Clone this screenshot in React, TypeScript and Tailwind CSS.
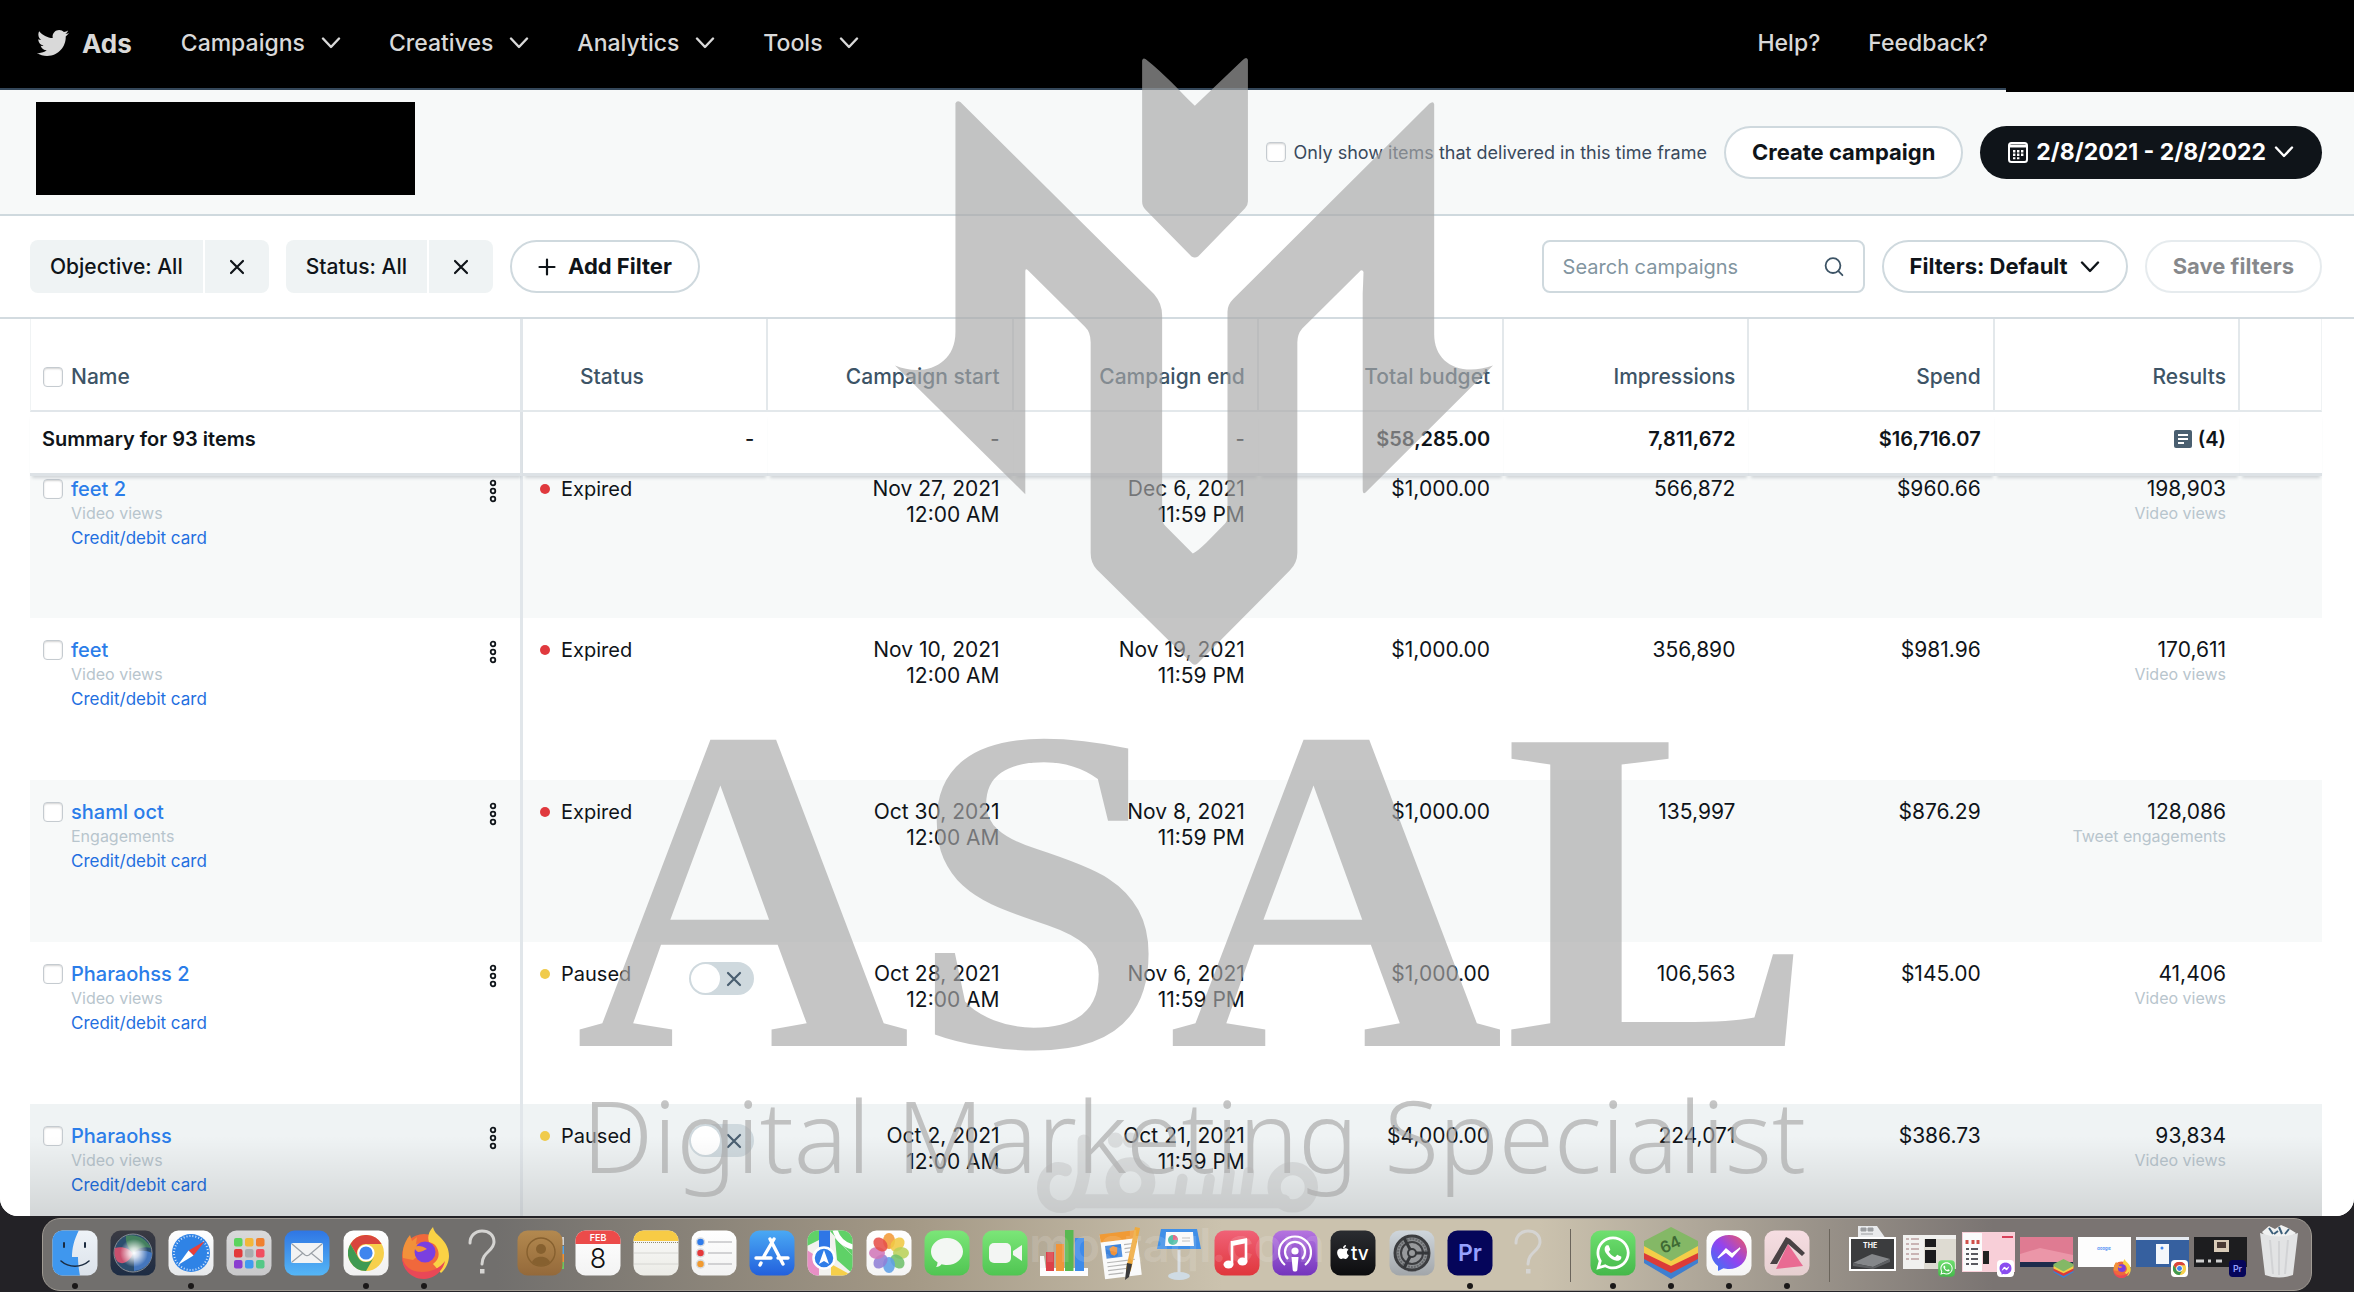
import React from "react";
import { FaApple, FaFacebookMessenger, FaTwitter, FaWhatsapp } from "react-icons/fa";

/* ---------- small glyphs ---------- */

function Chevron() {
  return (
    <svg viewBox="0 0 20 12" className="h-3 w-5" fill="none" stroke="currentColor" strokeWidth="2.4" strokeLinecap="round" strokeLinejoin="round" aria-hidden="true">
      <path d="M2 1.5l8 8.5 8-8.5" />
    </svg>
  );
}

function Cross() {
  return (
    <svg viewBox="0 0 16 16" className="h-4 w-4" fill="none" stroke="currentColor" strokeWidth="2.2" strokeLinecap="round" aria-hidden="true">
      <path d="M2 2l12 12M14 2L2 14" />
    </svg>
  );
}

function Plus() {
  return (
    <svg viewBox="0 0 18 18" className="h-[18px] w-[18px]" fill="none" stroke="currentColor" strokeWidth="2.2" strokeLinecap="round" aria-hidden="true">
      <path d="M9 1.5v15M1.5 9h15" />
    </svg>
  );
}

function SearchIcon() {
  return (
    <svg viewBox="0 0 20 20" className="h-5 w-5 text-[#3d5466]" fill="none" stroke="currentColor" strokeWidth="1.8" strokeLinecap="round" aria-hidden="true">
      <circle cx="9" cy="8.6" r="7.4" />
      <path d="M14.4 14.2l4 4" />
    </svg>
  );
}

function CalendarIcon() {
  return (
    <svg viewBox="0 0 20 21" className="h-[21px] w-5" aria-hidden="true">
      <rect x="1" y="1" width="18" height="19" rx="2.5" fill="none" stroke="#fff" strokeWidth="2" />
      <path d="M1 2.5h18v3H1z" fill="#fff" />
      <path d="M5 8h2.4v2.4H5zM9 8h2.4v2.4H9zM13 8h2.4v2.4H13zM5 11.6h2.4V14H5zM9 11.6h2.4V14H9zM13 11.6h2.4V14H13zM5 15.2h2.4v2H5zM9 15.2h2.4v2H9z" fill="#fff" />
    </svg>
  );
}

function DotsIcon() {
  return (
    <svg viewBox="0 0 8 24" className="h-6 w-2" fill="none" stroke="#0f1419" strokeWidth="1.8" aria-hidden="true">
      <circle cx="4" cy="4" r="2.300" />
      <circle cx="4" cy="12" r="2.300" />
      <circle cx="4" cy="20" r="2.300" />
    </svg>
  );
}

function NoteIcon() {
  return (
    <svg viewBox="0 0 18 18" className="h-[18px] w-[18px]" aria-hidden="true">
      <rect width="18" height="18" rx="2" fill="#4a5f70" />
      <path d="M4 5h10M4 9h10M4 13h6" stroke="#fff" strokeWidth="1.8" />
    </svg>
  );
}

const box =
  "block h-5 w-5 shrink-0 appearance-none rounded-[4px] border border-[#c5cbd0] bg-white shadow-[inset_0_1px_2px_rgba(0,0,0,0.18)]";

/* ---------- top bar ---------- */

function TopBar() {
  return (
    <header className="relative flex h-[90px] shrink-0 items-center border-b-2 border-[#34475a] bg-black pr-[366px] pb-0.5 pl-[36px] text-[#d9d9d9]">
      <div className="absolute top-0 right-0 h-[92px] w-[348px] bg-black" />
      <a href="#home" className="flex items-center gap-3">
        <FaTwitter className="h-8 w-[34px]" />
        <span className="text-[26px] font-bold">Ads</span>
      </a>
      <nav className="ml-[49px] flex flex-1 items-center gap-12">
        {["Campaigns", "Creatives", "Analytics", "Tools"].map((t) => (
          <button key={t} type="button" className="flex items-center gap-4 text-[23px] font-medium">
            {t}
            <Chevron />
          </button>
        ))}
        <a href="#help" className="ml-auto text-[23px] font-medium">Help?</a>
        <a href="#feedback" className="text-[23px] font-medium">Feedback?</a>
      </nav>
    </header>
  );
}

const pill = "flex h-[53px] items-center gap-3 rounded-full border-2 border-[#cfd9de] bg-white px-[26px] text-[22px] font-bold whitespace-nowrap text-[#0f1419]";

function SubHeader() {
  return (
    <section className="flex h-[126px] shrink-0 items-center border-b-2 border-[#cfd9de] bg-[#f7f9f9] pr-8 pl-9">
      <div className="mb-2 h-[93px] w-[379px] bg-black" />
      <div className="ml-auto flex items-center gap-[17px]">
        <label className="flex items-center gap-2 text-[18px] text-[#3a4a5c]">
          <input type="checkbox" className={box} />
          Only show items that delivered in this time frame
        </label>
        <button type="button" className={pill}>Create campaign</button>
        <button type="button" className="flex h-[53px] items-center gap-2 rounded-full bg-[#0f1419] px-7 text-[23px] font-bold whitespace-nowrap text-white">
          <CalendarIcon />
          2/8/2021 - 2/8/2022
          <Chevron />
        </button>
      </div>
    </section>
  );
}

function Chip({ text }: { text: string }) {
  return (
    <div className="flex h-[53px] gap-0.5 overflow-hidden rounded-lg text-[21px] font-medium text-[#0f1419]">
      <button type="button" className="bg-[#eff3f4] px-5">{text}</button>
      <button type="button" aria-label={"Remove " + text} className="flex w-[64px] items-center justify-center bg-[#eff3f4]">
        <Cross />
      </button>
    </div>
  );
}

function Toolbar() {
  return (
    <section className="flex h-[103px] shrink-0 items-center gap-[17px] border-b-2 border-[#d3dbe0] bg-white pr-8 pl-[30px]">
      <Chip text="Objective: All" />
      <Chip text="Status: All" />
      <button type="button" className={pill}>
        <Plus />
        Add Filter
      </button>
      <label className="ml-auto flex h-[53px] w-[323px] items-center rounded-lg border-2 border-[#cfd9de] px-[19px]">
        <input type="text" aria-label="Search campaigns" placeholder="Search campaigns" className="min-w-0 flex-1 bg-transparent text-[20px] outline-none placeholder:text-[#8295a0]" />
        <SearchIcon />
      </label>
      <button type="button" className={pill}>
        Filters: Default
        <Chevron />
      </button>
      <button type="button" className={pill + " opacity-50"}>Save filters</button>
    </section>
  );
}

/* ---------- table ---------- */

type Row = {
  name: string; kind: string; status: "Expired" | "Paused"; start: string; end: string;
  budget: string; impressions: string; spend: string; results: string; resultKind: string;
};

const rows: Row[] = [
  { name: "feet 2", kind: "Video views", status: "Expired", start: "Nov 27, 2021", end: "Dec 6, 2021", budget: "$1,000.00", impressions: "566,872", spend: "$960.66", results: "198,903", resultKind: "Video views" },
  { name: "feet", kind: "Video views", status: "Expired", start: "Nov 10, 2021", end: "Nov 19, 2021", budget: "$1,000.00", impressions: "356,890", spend: "$981.96", results: "170,611", resultKind: "Video views" },
  { name: "shaml oct", kind: "Engagements", status: "Expired", start: "Oct 30, 2021", end: "Nov 8, 2021", budget: "$1,000.00", impressions: "135,997", spend: "$876.29", results: "128,086", resultKind: "Tweet engagements" },
  { name: "Pharaohss 2", kind: "Video views", status: "Paused", start: "Oct 28, 2021", end: "Nov 6, 2021", budget: "$1,000.00", impressions: "106,563", spend: "$145.00", results: "41,406", resultKind: "Video views" },
  { name: "Pharaohss", kind: "Video views", status: "Paused", start: "Oct 2, 2021", end: "Oct 21, 2021", budget: "$4,000.00", impressions: "224,071", spend: "$386.73", results: "93,834", resultKind: "Video views" },
];

const headCell = "h-[93px] border-r-2 border-b-2 border-[#e3e8eb] pt-6 pr-3 text-right align-middle font-medium";
const sumCell = "relative z-10 h-[64px] border-b-[3px] border-[#dde2e6] bg-white pr-3.5 pb-2 text-right align-middle text-[#0f1419] shadow-[0_4px_3px_-2px_rgba(120,130,140,0.3)]";

function CampaignRow({ row, index }: { row: Row; index: number }) {
  const first = index === 0;
  const bg = index === 4 ? "bg-[#eff3f4]" : index % 2 === 0 ? "bg-[#f7f9f9]" : "bg-white";
  const pad = first ? "pt-0" : "pt-[19px]";
  const num = pad + " pr-3.5 text-right align-top text-[21px]";
  return (
    <tr className={bg + (first ? " h-[142px]" : " h-[162px]")}>
      <td className={pad + " border-r-[3px] border-[#e1e6ea] pr-4 pl-[13px] align-top"}>
        <div className="flex">
          <input type="checkbox" aria-label={"Select " + row.name} className={box + " mt-[3px] mr-2"} />
          <div className="flex-1">
            <a href="#campaign" className="block leading-[26px] font-medium text-[#2b7de9]">{row.name}</a>
            <div className="text-[16px] leading-[22px] text-[#b8c5cd]">{row.kind}</div>
            <a href="#card" className="block text-[17px] leading-[29px] text-[#1f6fe0]">Credit/debit card</a>
          </div>
          <button type="button" aria-label={"Options for " + row.name} className="mt-[3px] h-6 w-[22px] pl-[7px]">
            <DotsIcon />
          </button>
        </div>
      </td>
      <td className={pad + " pr-[14px] pl-[17px] align-top"}>
        <div className="flex items-start leading-[26px]">
          <span className={"mt-2 mr-[11px] h-2.5 w-2.5 rounded-full " + (row.status === "Expired" ? "bg-[#e0393e]" : "bg-[#f0cb4c]")} />
          {row.status}
          {row.status === "Paused" && (
            <button type="button" role="switch" aria-checked="false" aria-label={"Run " + row.name} className="mt-px ml-auto flex h-[33px] w-[65px] items-center rounded-full border-2 border-[#cfd9de] bg-[#cfd9de] text-[#4a5f70]">
              <span className="mr-1.5 h-[29px] w-[29px] rounded-full bg-white" />
              <Cross />
            </button>
          )}
        </div>
      </td>
      <td className={num + " leading-[26px]"}>{row.start}<br />12:00 AM</td>
      <td className={num + " leading-[26px]"}>{row.end}<br />11:59 PM</td>
      <td className={num + " leading-[26px]"}>{row.budget}</td>
      <td className={num + " leading-[26px]"}>{row.impressions}</td>
      <td className={num + " leading-[26px]"}>{row.spend}</td>
      <td className={num}>
        <div className="leading-[26px]">{row.results}</div>
        <div className="text-[16px] leading-[22px] text-[#b8c5cd]">{row.resultKind}</div>
      </td>
      <td />
    </tr>
  );
}

function CampaignTable() {
  return (
    <div className="relative min-h-0 flex-1 overflow-hidden bg-white pr-8 pl-[30px]">
      <table className="w-full table-fixed border-separate border-spacing-0 text-[20px] text-[#0f1419]">
        <colgroup>
          <col className="w-[493px]" />
          <col /><col /><col /><col /><col /><col /><col />
          <col className="w-[82px]" />
        </colgroup>
        <thead className="text-[21px] text-[#3d5466]">
          <tr>
            <th className="h-[93px] border-r-[3px] border-b-2 border-l border-[#e1e6ea] border-l-[#f0f3f4] pt-6 pl-3 text-left align-middle font-medium">
              <label className="flex items-center gap-2"><input type="checkbox" className={box} />Name</label>
            </th>
            <th className="h-[93px] border-r-2 border-b-2 border-[#e3e8eb] pt-6 pl-[57px] text-left align-middle font-medium">Status</th>
            {["Campaign start", "Campaign end", "Total budget", "Impressions", "Spend", "Results"].map((h) => (
              <th key={h} className={headCell}>{h}</th>
            ))}
            <th className="border-r border-b-2 border-[#e3e8eb] border-r-[#f0f3f4]" />
          </tr>
        </thead>
        <tbody>
          <tr className="font-semibold">
            <td className={sumCell + " border-r-[3px] pl-3"}><div className="text-left">Summary for 93 items</div></td>
            <td className={sumCell + " font-medium"}>-</td>
            <td className={sumCell + " font-medium"}>-</td>
            <td className={sumCell + " font-medium"}>-</td>
            <td className={sumCell}>$58,285.00</td>
            <td className={sumCell}>7,811,672</td>
            <td className={sumCell}>$16,716.07</td>
            <td className={sumCell}><div className="flex items-center justify-end gap-1.5"><NoteIcon />(4)</div></td>
            <td className={sumCell} />
          </tr>
          {rows.map((r, i) => <CampaignRow key={r.name} row={r} index={i} />)}
        </tbody>
      </table>
      <div className="pointer-events-none absolute right-8 bottom-0 left-[30px] h-[80px] bg-linear-to-b from-transparent to-black/12" />
    </div>
  );
}

/* ---------- dock ---------- */

function Icon({ children }: { children: React.ReactNode }) {
  return <svg viewBox="0 0 46 46" className="h-[46px] w-[46px] overflow-visible" aria-hidden="true">{children}</svg>;
}

function Tile({ fill, fill2, id }: { fill: string; fill2?: string; id: string }) {
  return (
    <>
      <defs>
        <linearGradient id={id} x1="0" y1="0" x2="0" y2="1">
          <stop offset="0" stopColor={fill} />
          <stop offset="1" stopColor={fill2 || fill} />
        </linearGradient>
        <clipPath id={id + "-clip"}><rect x="0.5" y="0.5" width="45" height="45" rx="10" /></clipPath>
      </defs>
      <rect x="0.5" y="0.5" width="45" height="45" rx="10" fill={"url(#" + id + ")"} />
    </>
  );
}

function ChromeMark({ r = 18 }: { r?: number }) {
  return (
    <svg x={23 - r} y={23 - r} width={r * 2} height={r * 2} viewBox="-18 -18 36 36">
      <circle r="18" fill="#f7d04b" />
      <path d="M-15.6 -9A18 18 0 0 1 15.6 -9L0 -9A9 9 0 0 0 -7.8 4.5Z" fill="#d9453d" />
      <path d="M-15.6 -9A18 18 0 0 0 0 18L7.8 4.5A9 9 0 0 1 -7.8 4.5Z" fill="#3f9a52" />
      <circle r="8.6" fill="#fff" />
      <circle r="6.6" fill="#3f85ee" />
    </svg>
  );
}

function FirefoxMark() {
  return (
    <>
      <circle cx="23" cy="26" r="22" fill="#f0683c" />
      <path d="M2 20C3 14 5 10 9 5l2 6 5-4-1 7c4-1 8 1 10 5L12 30 2 28z" fill="#f2913a" />
      <path d="M32 34c6-4 7-10 4-16-1-3-4-5-8-6-2-5 0-11 4-15 1 5 4 7 8 11 5 5 8 11 8 18 0 6-3 13-8 17z" fill="#fad245" />
      <path d="M1 27c2 9 9 15 20 15 10 0 18-4 23-11-2 10-11 18-21 18C11 49 1 40 1 27z" fill="#e94857" />
      <circle cx="24" cy="22" r="10.500" fill="#7a3fe0" />
      <path d="M13 17c4-2 9-1 13 2-3 1-5 3-9 3-2-1-3-3-4-5z" fill="#f2913a" />
    </>
  );
}

function Question() {
  return (
    <Icon>
      <path d="M11 13c0-7 5-12 12-12s12 4 12 11c0 9-12 10-12 22" fill="none" stroke="#d5d4d2" strokeWidth="3" strokeLinecap="round" />
      <rect x="21" y="39" width="4.500" height="4.500" fill="#d5d4d2" />
    </Icon>
  );
}

function Layers() {
  return (
    <>
      <path d="M-4 24L23 39 50 24V33L23 49-4 33z" fill="#3f7fd0" />
      <path d="M-4 20L23 34 50 20V29L23 43-4 29z" fill="#db3b38" />
      <path d="M-4 14L23 28 50 14V23L23 36-4 23z" fill="#f4ce48" />
      <path d="M-4 11L23-3 50 11V16L23 31-4 16z" fill="#84b866" />
    </>
  );
}

const petals = [
  ["#f29a38", 0], ["#f0c843", 45], ["#b9d05a", 90], ["#6fc06c", 135], ["#5f9fe6", 180], ["#8f7fd6", 225], ["#d078b8", 270], ["#e6504a", 315],
] as const;

const launchColors = ["#5bd45e", "#f2b73a", "#f08030", "#e23b3b", "#a9adb0", "#f04f62", "#8a3fd0", "#3f9bf0", "#54c887"];

function Thumb({ h, bg, children, badge }: { h: number; bg: string; children?: React.ReactNode; badge?: React.ReactNode }) {
  return (
    <svg viewBox="0 0 54 54" className="h-[54px] w-[54px] overflow-visible" aria-hidden="true">
      <rect x="0" y={26 - h / 2} width="53" height={h} fill={bg} />
      {children}
      {badge && <svg x="35" y="34" width="17" height="17" viewBox="0 0 46 46" overflow="visible">{badge}</svg>}
    </svg>
  );
}

const messengerMark = <FaFacebookMessenger size={34} x={6} y={6} color="#8a4df0" />;

const apps: { name: string; run?: boolean; art: React.ReactNode }[] = [
  { name: "Finder", run: true, art: <Icon><Tile id="finder" fill="#eef3f8" fill2="#dbe2ea" /><path clipPath="url(#finder-clip)" d="M0 0H27C22 10 20 18 20 27H26C26 34 27 40 28 46H0z" fill="#3f97ee" /><path d="M12 13v4M33 13v4" stroke="#1b2b40" strokeWidth="2" strokeLinecap="round" /><path d="M9 31c8 7 20 7 28 0" fill="none" stroke="#1b2b40" strokeWidth="1.600" strokeLinecap="round" /></Icon> },
  { name: "Siri", art: <Icon><defs><radialGradient id="siri-glow"><stop offset="0" stopColor="#fff" /><stop offset=".35" stopColor="#fff" stopOpacity=".75" /><stop offset="1" stopColor="#fff" stopOpacity="0" /></radialGradient></defs><Tile id="siri" fill="#3a3a42" fill2="#1d2c44" /><circle cx="23" cy="23" r="19" fill="#2c4d6e" stroke="#8a8f95" /><path d="M5 18c8-2 15 1 18 6-4 8-10 11-15 8-4-4-4-10-3-14z" fill="#c9506e" /><path d="M16 6c10-3 21 3 25 12-8-2-13 0-18 5-4-4-8-10-7-17z" fill="#44805f" /><path d="M42 23c0 10-8 17-18 18 0-8 0-13-1-18 6-3 13-3 19 0z" fill="#4476bd" /><circle cx="24" cy="23" r="14" fill="url(#siri-glow)" /></Icon> },
  { name: "Safari", run: true, art: <Icon><Tile id="safari" fill="#ffffff" fill2="#e6e8ea" /><circle cx="23" cy="23" r="19" fill="#2f83e6" /><circle cx="23" cy="23" r="17" fill="none" stroke="#cfe2fa" strokeWidth="2" strokeDasharray="1 2" /><path d="M37 11L20.500 20.500 25.500 25.500z" fill="#e8403b" /><path d="M10 35L20.500 20.500 25.500 25.500z" fill="#fff" /></Icon> },
  { name: "Launchpad", art: <Icon><Tile id="launch" fill="#d9d9da" fill2="#c8c8ca" />{launchColors.map((c, i) => <rect key={c} x={8 + (i % 3) * 11} y={8 + Math.floor(i / 3) * 11} width="8.500" height="8.500" rx="2" fill={c} />)}</Icon> },
  { name: "Mail", art: <Icon><Tile id="mail" fill="#2f76e4" fill2="#55b6f6" /><rect x="7" y="13" width="32" height="20" rx="2" fill="#f2f3f4" /><path d="M8 14l13 11c1.500 1 2.500 1 4 0l13-11M8 32l11-9M38 32l-11-9" fill="none" stroke="#9aa0a6" strokeWidth="1.200" /></Icon> },
  { name: "Chrome", run: true, art: <Icon><Tile id="chrome" fill="#ffffff" fill2="#f0f0f0" /><ChromeMark /></Icon> },
  { name: "Firefox", run: true, art: <Icon><FirefoxMark /></Icon> },
  { name: "Missing app", art: <Question /> },
  { name: "Contacts", art: <Icon><path d="M44 7h3v8h-3z" fill="#cfd0d2" /><path d="M44 16h3v8h-3z" fill="#4fa3ec" /><path d="M44 24h3v8h-3z" fill="#ef9236" /><path d="M44 32h3v7h-3z" fill="#6cc660" /><Tile id="contacts" fill="#b3894f" fill2="#94693a" /><circle cx="24" cy="22" r="14" fill="none" stroke="#86602f" strokeWidth="1.400" /><circle cx="24" cy="19" r="5" fill="#86602f" /><path d="M15 32c3-7 15-7 18 0-5 5-13 5-18 0z" fill="#86602f" /></Icon> },
  { name: "Calendar", art: <Icon><Tile id="cal" fill="#ffffff" fill2="#f3f3f3" /><path clipPath="url(#cal-clip)" d="M0 0h46v14H0z" fill="#ec4b4a" /><text x="23" y="11" textAnchor="middle" fontSize="9" fontWeight="600" fill="#fff">FEB</text><text x="23" y="38" textAnchor="middle" fontSize="27" fontWeight="300" fill="#111">8</text></Icon> },
  { name: "Notes", art: <Icon><Tile id="notes" fill="#fbfbfa" fill2="#ebebe6" /><path clipPath="url(#notes-clip)" d="M0 0h46v11H0z" fill="#f7cb45" /><path d="M0 12.500h46" stroke="#8f8a70" strokeDasharray="1 1" /><path d="M1 23h44M1 34h44" stroke="#d6d6d2" /></Icon> },
  { name: "Reminders", art: <Icon><Tile id="rem" fill="#ffffff" fill2="#f2f2f2" />{["#2f7bea", "#e5383b", "#f19a30"].map((c, i) => <g key={c}><circle cx="9.500" cy={12 + i * 11} r="4" fill={c} stroke="#d7dbe0" strokeWidth="1.500" /><path d={"M17 " + (12 + i * 11) + "h24"} stroke="#c9c9cb" strokeWidth="1.600" /></g>)}</Icon> },
  { name: "App Store", art: <Icon><Tile id="store" fill="#4aa9f4" fill2="#2260dd" /><path d="M21 9l13 25M25 9L14 28M11 35l1-2M7 28h15M29 28h10" stroke="#fff" strokeWidth="3.400" strokeLinecap="round" fill="none" /></Icon> },
  { name: "Maps", art: <Icon><Tile id="maps" fill="#f2f2ee" /><g clipPath="url(#maps-clip)"><path d="M22 0h24v26z" fill="#5fd167" /><path d="M0 0h12v10L0 16z" fill="#5fd167" /><path d="M12 0h11v22H12z" fill="#2f76e6" /><path d="M0 20l12 8v18H0z" fill="#e88fc4" /><path d="M24 46V34l22 12z" fill="#f6cf4a" /><path d="M30 30l16 14V26L28 8z" fill="#5fd167" /><path d="M28 0c3 10 9 15 18 17" fill="none" stroke="#fff" strokeWidth="5" /></g><circle cx="17" cy="28" r="10.500" fill="#2f7de8" stroke="#fff" strokeWidth="2.500" /><path d="M17 20l5 14-5-3-5 3z" fill="#fff" /></Icon> },
  { name: "Photos", art: <Icon><Tile id="photos" fill="#ffffff" fill2="#f4f4f4" />{petals.map(([c, a]) => <ellipse key={c} cx="23" cy="11" rx="6" ry="8" fill={c} opacity=".88" transform={"rotate(" + a + " 23 23)"} />)}</Icon> },
  { name: "Messages", art: <Icon><Tile id="msg" fill="#7be678" fill2="#50c552" /><path d="M23 8c9 0 16 6 16 13.500S32 35 23 35c-2 0-4-.3-5.500-.8-1.500 1.800-3 2.500-5.500 2.800 1-1.500 1.500-3 1.500-4.800C9.500 30 7 26 7 21.500 7 14 14 8 23 8z" fill="#f3f7f3" /></Icon> },
  { name: "FaceTime", art: <Icon><Tile id="face" fill="#7be678" fill2="#50c552" /><rect x="7" y="13" width="22" height="20" rx="5" fill="#f3f5f3" /><path d="M31 21l9-6v16l-9-6z" fill="#f3f5f3" /></Icon> },
  { name: "Numbers", art: <Icon><path d="M0 26h4l2 14h40v6H0z" fill="#f6f6f6" /><path d="M0 38h48v8H0z" fill="#fdfdfd" /><path d="M6 22h8v19H6z" fill="#dc4048" /><path d="M16 14h8v27h-8z" fill="#f0953a" /><path d="M25 0h8.500v41H25z" fill="#58b850" /><path d="M35 8h9v33h-9z" fill="#3e8bea" /></Icon> },
  { name: "Pages", art: <Icon><g transform="rotate(-7 23 23)"><path d="M4 3h37v44H4z" fill="#fafafa" /><path d="M4 2h37v8H4z" fill="#f09a35" /><path d="M8 14h16v13H8z" fill="#3c83dc" /><path d="M12 17l4-2 4 2-1 6-3 2-3-2z" fill="#f0923a" /><path d="M27 15h11M27 19h11M27 23h9M8 31h28M8 35h25M8 39h22M8 43h15" stroke="#b5b5b5" strokeWidth="1.200" /></g><path d="M37-3l5 1-9 42-4 8-1-9z" fill="#efaa3d" /><path d="M29 33l5 1-3 13-4 3z" fill="#3a3a3c" /></Icon> },
  { name: "Keynote", art: <Icon><path d="M5-1h36l4 20H1z" fill="#3f8fe8" /><path d="M10 2h27l1 14H9z" fill="#fafafa" /><circle cx="17" cy="10" r="5" fill="#57c0a8" /><path d="M17 5a5 5 0 0 1 5 5h-5z" fill="#e86a8a" /><path d="M26 8h8M26 11h8" stroke="#bbb" /><path d="M21.500 20h3v25h-3z" fill="#d8dde1" /><ellipse cx="23" cy="46" rx="11" ry="4" fill="#cfdbe4" /></Icon> },
  { name: "Music", art: <Icon><Tile id="music" fill="#f06277" fill2="#e0363c" /><path d="M18 11l15-3v5l-15 3z" fill="#fff" /><path d="M18 11v23M32 9v22" stroke="#fff" strokeWidth="2.600" /><ellipse cx="14.500" cy="34.500" rx="5" ry="4" fill="#fff" /><ellipse cx="28.500" cy="31.500" rx="5" ry="4" fill="#fff" /></Icon> },
  { name: "Podcasts", art: <Icon><Tile id="pod" fill="#b574e0" fill2="#7434bd" /><circle cx="23" cy="21" r="3.600" fill="#fff" /><path d="M19.500 27h7l-1.200 13c-.4 2-4.200 2-4.600 0z" fill="#fff" /><path d="M16 29a10 10 0 1 1 14 0M13 35a16 16 0 1 1 20 0" fill="none" stroke="#fff" strokeWidth="2.200" /></Icon> },
  { name: "TV", art: <Icon><Tile id="tv" fill="#2b2d31" fill2="#0c0c0e" /><FaApple size={16} x={5} y={14} color="#fff" /><text x="21" y="30" fontSize="19" fontWeight="500" fill="#fff">tv</text></Icon> },
  { name: "Settings", art: <Icon><Tile id="set" fill="#cfd6dc" fill2="#a2a6aa" /><circle cx="23" cy="23" r="17" fill="#8c8f92" stroke="#3c3d40" strokeWidth="3" /><circle cx="23" cy="23" r="14" fill="none" stroke="#66686b" strokeWidth="2" strokeDasharray="2 1" /><circle cx="23" cy="23" r="11" fill="#97999c" stroke="#3c3d40" strokeWidth="2" /><path d="M23 23h17M23 23l-8-15M23 23l-8 15" stroke="#35373a" strokeWidth="3" /><circle cx="23" cy="23" r="4" fill="#97999c" stroke="#35373a" strokeWidth="2" /></Icon> },
  { name: "Premiere", run: true, art: <Icon><Tile id="pr" fill="#05055a" /><text x="23" y="31" textAnchor="middle" fontSize="23" fontWeight="600" fill="#96a0ff">Pr</text></Icon> },
  { name: "Missing app 2", art: <Question /> },
];

const whatsappArt = <><Tile id="wa" fill="#6fe070" fill2="#45b84a" /><FaWhatsapp size={38} x={4} y={4} color="#fff" /></>;

const running: { name: string; art: React.ReactNode }[] = [
  { name: "WhatsApp", art: <Icon>{whatsappArt}</Icon> },
  { name: "BlueStacks", art: <Icon><Layers /><text x="23" y="20" textAnchor="middle" fontSize="16" fontWeight="600" fill="#3f6a34" transform="rotate(-25 23 16)">64</text></Icon> },
  { name: "Messenger", art: <Icon><Tile id="fbm" fill="#ffffff" fill2="#f5f5f5" /><defs><linearGradient id="mg" x1="1" y1="0" x2="0" y2="1"><stop offset="0" stopColor="#f0585f" /><stop offset=".5" stopColor="#9243f0" /><stop offset="1" stopColor="#2f7bf5" /></linearGradient></defs><path d="M23 5c10 0 18 7 18 17s-8 17-18 17c-2 0-4-.2-5.500-.7L12 41v-5C8 33 5 28 5 22 5 12 13 5 23 5z" fill="url(#mg)" /><path d="M12 28l8-9 6 5 8-6-8 9-6-5z" fill="#fff" stroke="#fff" strokeWidth="1.500" /></Icon> },
  { name: "Asphalt", art: <Icon><Tile id="asp" fill="#f6dde2" fill2="#e6cfd0" /><path d="M24 14l15 22-27 3z" fill="#e8487c" opacity=".75" /><path d="M6 34L22 7l4 2 15 14-3 3-14-12-11 20z" fill="#4a4245" /></Icon> },
];

const windows: { name: string; art: React.ReactNode }[] = [
  { name: "Downloads", art: <svg viewBox="0 0 54 54" className="h-[54px] w-[54px] overflow-visible" aria-hidden="true"><path d="M13 0h19l9 13H13z" fill="#e9eaec" /><path d="M16 2h5v3h-5zM23 2h5v3h-5zM16 8h12" fill="#9b9da0" stroke="#9b9da0" /><rect x="4" y="11" width="47" height="34" fill="#fff" /><rect x="6" y="13" width="43" height="30" fill="#3b3c3e" /><path d="M8 37l19-9 18 5-17 8z" fill="#85878a" /><path d="M8 37l20 4 17-8v3l-17 7-20-3z" fill="#5e6063" /><text x="18" y="22" fontSize="7" fontWeight="700" fill="#fff">THE</text></svg> },
  { name: "WhatsApp window", art: <Thumb h={34} bg="#f1f1ef" badge={<>{whatsappArt}</>}><path d="M21 13h32v30H21z" fill="#dedbd2" /><path d="M22 13h11v8H22zM22 24h11v13H22z" fill="#1b1b1d" /><path d="M3 13h14M3 18h14M3 23h14M3 28h14M3 33h14" stroke="#c9b4b4" strokeWidth="2" strokeDasharray="3 2 8 2" /></Thumb> },
  { name: "Messenger window", art: <Thumb h={40} bg="#f8cfd8" badge={<><rect width="46" height="46" rx="10" fill="#fff" />{messengerMark}</>}><path d="M1 7h19v38H1z" fill="#fbfbfb" /><path d="M5 14v4M11 14v4M16 14v4" stroke="#d0504a" strokeWidth="3" /><path d="M4 23h12M4 28h12M4 33h12M4 38h12" stroke="#5a5a60" strokeWidth="2" strokeDasharray="3 2 7 2" /><path d="M21 25h6v13h-6z" fill="#222" /><path d="M40 10h11v2H40z" fill="#d8405a" /></Thumb> },
  { name: "BlueStacks window", art: <Thumb h={30} bg="#df7b92" badge={<Layers />}><path d="M0 28l20-6 33 7v8H0z" fill="#eb96a8" /><path d="M0 36h53v5H0z" fill="#1e2c4c" /></Thumb> },
  { name: "Firefox window", art: <Thumb h={30} bg="#fdfdfd" badge={<FirefoxMark />}><text x="26" y="24" textAnchor="middle" fontSize="4" fontWeight="600" fill="#4285f4">Google</text></Thumb> },
  { name: "Chrome window", art: <Thumb h={30} bg="#36609f" badge={<><rect width="46" height="46" rx="10" fill="#fff" /><ChromeMark /></>}><path d="M0 11h53v3H0z" fill="#e6ebf2" /><path d="M20 18h13v20H20z" fill="#f4f7fb" /><circle cx="26" cy="22" r="1.500" fill="#3f85ee" /></Thumb> },
  { name: "Premiere window", art: <Thumb h={30} bg="#1d1d1f" badge={<><rect width="46" height="46" rx="10" fill="#05055a" /><text x="23" y="32" textAnchor="middle" fontSize="24" fontWeight="600" fill="#96a0ff">Pr</text></>}><path d="M20 14h15v12H20z" fill="#d9cbb8" /><path d="M23 16h9v6h-9z" fill="#4a3a34" /><path d="M2 35h8M14 35h3M22 35h6" stroke="#cfcfcf" strokeWidth="3" /></Thumb> },
  { name: "Trash", art: <svg viewBox="0 0 54 54" className="h-[54px] w-[54px] overflow-visible" aria-hidden="true"><path d="M10 6l7-6 6 3 6-4 7 3 8 5-8 6H16z" fill="#f0f1f1" /><path d="M17 2l4 6M27 1l3 7M37 3l-4 5M22 8l4-3" stroke="#3c5f7a" strokeWidth="2" /><path d="M8 7q19 7 38 0l-5 42q-14 5-28 0z" fill="#e2e3e4" /><path d="M18 14l3 34M27 15v34M36 14l-3 34" stroke="#d2d3d5" strokeWidth="2" /></svg> },
];

function Slot({ children, run, name }: { children: React.ReactNode; run?: boolean; name: string }) {
  return (
    <button type="button" aria-label={name} className="flex h-full min-w-0 flex-1 flex-col items-center">
      <span className="mt-[11px] flex h-[46px] items-center justify-center">{children}</span>
      {run && <span className="mt-[7px] h-1.5 w-1.5 rounded-full bg-[#1a1818]" />}
    </button>
  );
}

function Divider() {
  return <div className="flex w-[27px] justify-center"><span className="mt-[10px] h-[53px] w-px bg-[#6b655c]" /></div>;
}

function Dock() {
  return (
    <footer className="h-[76px] shrink-0 pt-0.5 pr-[42px] pl-[42px]">
      <div className="flex h-[73px] rounded-[18px] border border-[#a09b93] bg-[linear-gradient(90deg,#716f6d_20%,#a39885_38%,#cbc2ae_52%,#cbc2ae_66%,#7a7472_86%)] px-[3px]">
        {apps.map((a) => <Slot key={a.name} name={a.name} run={a.run}>{a.art}</Slot>)}
        <Divider />
        {running.map((a) => <Slot key={a.name} name={a.name} run>{a.art}</Slot>)}
        <Divider />
        {windows.map((a) => <Slot key={a.name} name={a.name}>{a.art}</Slot>)}
      </div>
    </footer>
  );
}

/* ---------- watermarks ---------- */

function Watermark() {
  return (
    <div className="pointer-events-none absolute inset-0 z-20 flex flex-col items-center overflow-hidden pt-[58px] pl-[34px] text-[#a8a8a8] opacity-66">
      <svg viewBox="38 44 1464 1486" className="h-[607px] w-[598px] shrink-0" fill="currentColor" aria-hidden="true">
        <path d="M643 50Q645 42 652 47C700 85 730 120 772 161L890 48Q899 40 902 48V395Q902 404 895 412L780 530Q772 535 764 530L652 416Q643 407 643 395Z" />
        <path d="M186 155Q190 147 198 152L672 622Q692 645 692 675V1165Q692 1182 700 1190L767 1257Q775 1255 800 1231L845 1185Q852 1178 852 1165V665Q852 648 866 634L1346 156Q1356 148 1358 157V720C1358 790 1420 825 1502 797L1190 1108Q1183 1114 1183 1100V620Q1184 600 1185 568Q1182 560 1175 567L1035 706Q1023 720 1023 740V1255Q1023 1280 1005 1298L778 1527Q772 1532 766 1527L532 1296Q517 1280 517 1255V740Q517 715 503 702L364 564Q357 557 357 566V1112L38 797C105 825 186 800 186 715Z" />
      </svg>
      <div className="mt-[75px] font-['Liberation_Serif'] text-[464px] leading-[300px] font-bold whitespace-nowrap">ASAL</div>
      <div className="mt-11 font-['Noto_Sans'] text-[100px] leading-[100px] font-light whitespace-nowrap">Digital Marketing Specialist</div>
    </div>
  );
}

function SiteMark() {
  return (
    <div className="pointer-events-none absolute inset-x-0 bottom-0 z-30 flex flex-col items-center">
      <svg viewBox="40 -15 860 250" className="h-[84px] w-[286px] opacity-35" fill="none" stroke="#b4b4b4" strokeLinecap="round" aria-hidden="true">
        <path d="M135 98C95 80 68 115 68 152C68 190 95 212 130 208C165 203 180 170 190 110V10" strokeWidth="38" />
        <circle cx="330" cy="135" r="54" strokeWidth="42" />
        <circle cx="285" cy="8" r="18" strokeWidth="10" fill="#b4b4b4" />
        <circle cx="330" cy="8" r="18" strokeWidth="10" fill="#b4b4b4" />
        <path d="M170 192H790" strokeWidth="42" />
        <path d="M478 175L486 125M560 175L568 125M618 175L628 105M676 175L686 105" strokeWidth="32" />
        <circle cx="818" cy="150" r="56" strokeWidth="40" />
      </svg>
      <div className="h-[76px] text-[47px] leading-[58px] font-semibold text-white/15">mostaql.com</div>
    </div>
  );
}

export default function App() {
  return (
    <div className="relative flex h-screen flex-col overflow-hidden bg-[#232226] font-['Inter',sans-serif]">
      <main className="flex min-h-0 flex-1 flex-col overflow-hidden rounded-b-[18px] bg-white">
        <TopBar />
        <SubHeader />
        <Toolbar />
        <CampaignTable />
      </main>
      <Dock />
      <Watermark />
      <SiteMark />
    </div>
  );
}
